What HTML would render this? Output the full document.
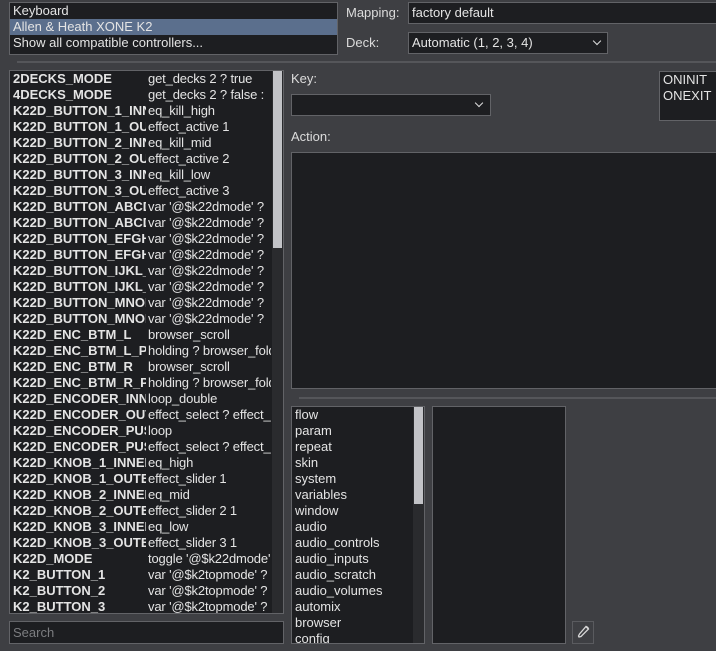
<!DOCTYPE html>
<html><head><meta charset="utf-8"><style>
*{box-sizing:border-box;margin:0;padding:0}
body{width:716px;height:651px;background:#3e3f43;font-family:"Liberation Sans",sans-serif;font-size:13px;color:#e4e4e4;position:relative;overflow:hidden}
.b{position:absolute;background:#1d1e21;border:1px solid #626367;overflow:hidden}
.a{position:absolute}
.row{height:16px;line-height:16px;white-space:nowrap}
.sb{position:absolute;background:#2a2b2e}
.th{position:absolute;background:#c2c3c7}
.lbl{position:absolute;color:#dcdcdc}
.hr{position:absolute;height:2px;background:#55565a}
.l{display:inline-block;width:133px;margin-right:2px;overflow:hidden;font-weight:bold;vertical-align:top;letter-spacing:0}
.r{display:inline-block;letter-spacing:-0.15px;vertical-align:top}
.chev{position:absolute;width:6px;height:6px;border-right:1.5px solid #ddd;border-bottom:1.5px solid #ddd;transform:rotate(45deg)}
</style></head><body>
<div class="b" style="left:9px;top:2px;width:329px;height:53px;padding-top:0">
<div class="row" style="padding-left:3px">Keyboard</div>
<div class="row" style="padding-left:3px;background:#5b6f8d">Allen &amp; Heath XONE K2</div>
<div class="row" style="padding-left:3px">Show all compatible controllers...</div>
</div>
<div class="lbl" style="left:346px;top:5px">Mapping:</div>
<div class="b" style="left:408px;top:2px;width:310px;height:22px;padding:2px 3px">factory default</div>
<div class="lbl" style="left:346px;top:35px">Deck:</div>
<div class="b" style="left:408px;top:32px;width:200px;height:22px;padding:2px 3px">Automatic (1, 2, 3, 4)<div class="chev" style="left:185px;top:5px"></div></div>
<div class="hr" style="left:17px;top:61px;width:699px"></div>

<div class="b" style="left:9px;top:70px;width:275px;height:544px;padding-left:3px">
<div class="sb" style="left:262px;top:0;width:11px;height:542px"></div>
<div class="th" style="left:263px;top:0;width:9px;height:177px"></div>
<div style="width:258px;overflow:hidden">
<div class="row"><span class="l">2DECKS_MODE</span><span class="r">get_decks 2 ? true</span></div>
<div class="row"><span class="l">4DECKS_MODE</span><span class="r">get_decks 2 ? false :</span></div>
<div class="row"><span class="l">K22D_BUTTON_1_INNER</span><span class="r">eq_kill_high</span></div>
<div class="row"><span class="l">K22D_BUTTON_1_OUTER</span><span class="r">effect_active 1</span></div>
<div class="row"><span class="l">K22D_BUTTON_2_INNER</span><span class="r">eq_kill_mid</span></div>
<div class="row"><span class="l">K22D_BUTTON_2_OUTER</span><span class="r">effect_active 2</span></div>
<div class="row"><span class="l">K22D_BUTTON_3_INNER</span><span class="r">eq_kill_low</span></div>
<div class="row"><span class="l">K22D_BUTTON_3_OUTER</span><span class="r">effect_active 3</span></div>
<div class="row"><span class="l">K22D_BUTTON_ABCD</span><span class="r">var '@$k22dmode' ?</span></div>
<div class="row"><span class="l">K22D_BUTTON_ABCD</span><span class="r">var '@$k22dmode' ?</span></div>
<div class="row"><span class="l">K22D_BUTTON_EFGH</span><span class="r">var '@$k22dmode' ?</span></div>
<div class="row"><span class="l">K22D_BUTTON_EFGH</span><span class="r">var '@$k22dmode' ?</span></div>
<div class="row"><span class="l">K22D_BUTTON_IJKL_</span><span class="r">var '@$k22dmode' ?</span></div>
<div class="row"><span class="l">K22D_BUTTON_IJKL_</span><span class="r">var '@$k22dmode' ?</span></div>
<div class="row"><span class="l">K22D_BUTTON_MNOP</span><span class="r">var '@$k22dmode' ?</span></div>
<div class="row"><span class="l">K22D_BUTTON_MNOP</span><span class="r">var '@$k22dmode' ?</span></div>
<div class="row"><span class="l">K22D_ENC_BTM_L</span><span class="r">browser_scroll</span></div>
<div class="row"><span class="l">K22D_ENC_BTM_L_PUSH</span><span class="r">holding ? browser_folder</span></div>
<div class="row"><span class="l">K22D_ENC_BTM_R</span><span class="r">browser_scroll</span></div>
<div class="row"><span class="l">K22D_ENC_BTM_R_PUSH</span><span class="r">holding ? browser_folder</span></div>
<div class="row"><span class="l">K22D_ENCODER_INNER</span><span class="r">loop_double</span></div>
<div class="row"><span class="l">K22D_ENCODER_OUTER</span><span class="r">effect_select ? effect_</span></div>
<div class="row"><span class="l">K22D_ENCODER_PUSH</span><span class="r">loop</span></div>
<div class="row"><span class="l">K22D_ENCODER_PUSH</span><span class="r">effect_select ? effect_</span></div>
<div class="row"><span class="l">K22D_KNOB_1_INNER</span><span class="r">eq_high</span></div>
<div class="row"><span class="l">K22D_KNOB_1_OUTER</span><span class="r">effect_slider 1</span></div>
<div class="row"><span class="l">K22D_KNOB_2_INNER</span><span class="r">eq_mid</span></div>
<div class="row"><span class="l">K22D_KNOB_2_OUTER</span><span class="r">effect_slider 2 1</span></div>
<div class="row"><span class="l">K22D_KNOB_3_INNER</span><span class="r">eq_low</span></div>
<div class="row"><span class="l">K22D_KNOB_3_OUTER</span><span class="r">effect_slider 3 1</span></div>
<div class="row"><span class="l">K22D_MODE</span><span class="r">toggle '@$k22dmode'</span></div>
<div class="row"><span class="l">K2_BUTTON_1</span><span class="r">var '@$k2topmode' ?</span></div>
<div class="row"><span class="l">K2_BUTTON_2</span><span class="r">var '@$k2topmode' ?</span></div>
<div class="row"><span class="l">K2_BUTTON_3</span><span class="r">var '@$k2topmode' ?</span></div>
</div></div>
<div class="b" style="left:9px;top:621px;width:275px;height:23px;padding:3px 3px;color:#7c7d80">Search</div>

<div class="lbl" style="left:291px;top:71px">Key:</div>
<div class="b" style="left:291px;top:94px;width:200px;height:22px"><div class="chev" style="left:184px;top:5px"></div></div>
<div class="lbl" style="left:291px;top:129px">Action:</div>
<div class="b" style="left:291px;top:152px;width:430px;height:237px"></div>
<div class="b" style="left:659px;top:71px;width:60px;height:50px;padding:0 3px">
<div class="row">ONINIT</div><div class="row">ONEXIT</div></div>
<div class="hr" style="left:299px;top:397px;width:417px"></div>

<div class="b" style="left:291px;top:406px;width:134px;height:238px;padding-left:3px">
<div class="sb" style="left:121px;top:0;width:11px;height:236px"></div>
<div class="th" style="left:122px;top:0;width:9px;height:97px"></div>
<div class="row">flow</div><div class="row">param</div><div class="row">repeat</div><div class="row">skin</div><div class="row">system</div><div class="row">variables</div><div class="row">window</div><div class="row">audio</div><div class="row">audio_controls</div><div class="row">audio_inputs</div><div class="row">audio_scratch</div><div class="row">audio_volumes</div><div class="row">automix</div><div class="row">browser</div><div class="row">config</div>
</div>
<div class="b" style="left:432px;top:406px;width:134px;height:238px"></div>
<div class="a" style="left:572px;top:621px;width:22px;height:23px;border:1px solid #5a5b5f;background:#3e3f43">
<svg width="20" height="21" viewBox="0 0 20 21"><path d="M13 4.5 L15.5 7 L8 14.5 L6 15 L5.5 14 L6.5 12 Z" fill="none" stroke="#d8d8d8" stroke-width="1.3"/><path d="M12.5 5 L15 7.5 L16 6 L14 4 Z" fill="#d8d8d8"/></svg>
</div>
</body></html>
